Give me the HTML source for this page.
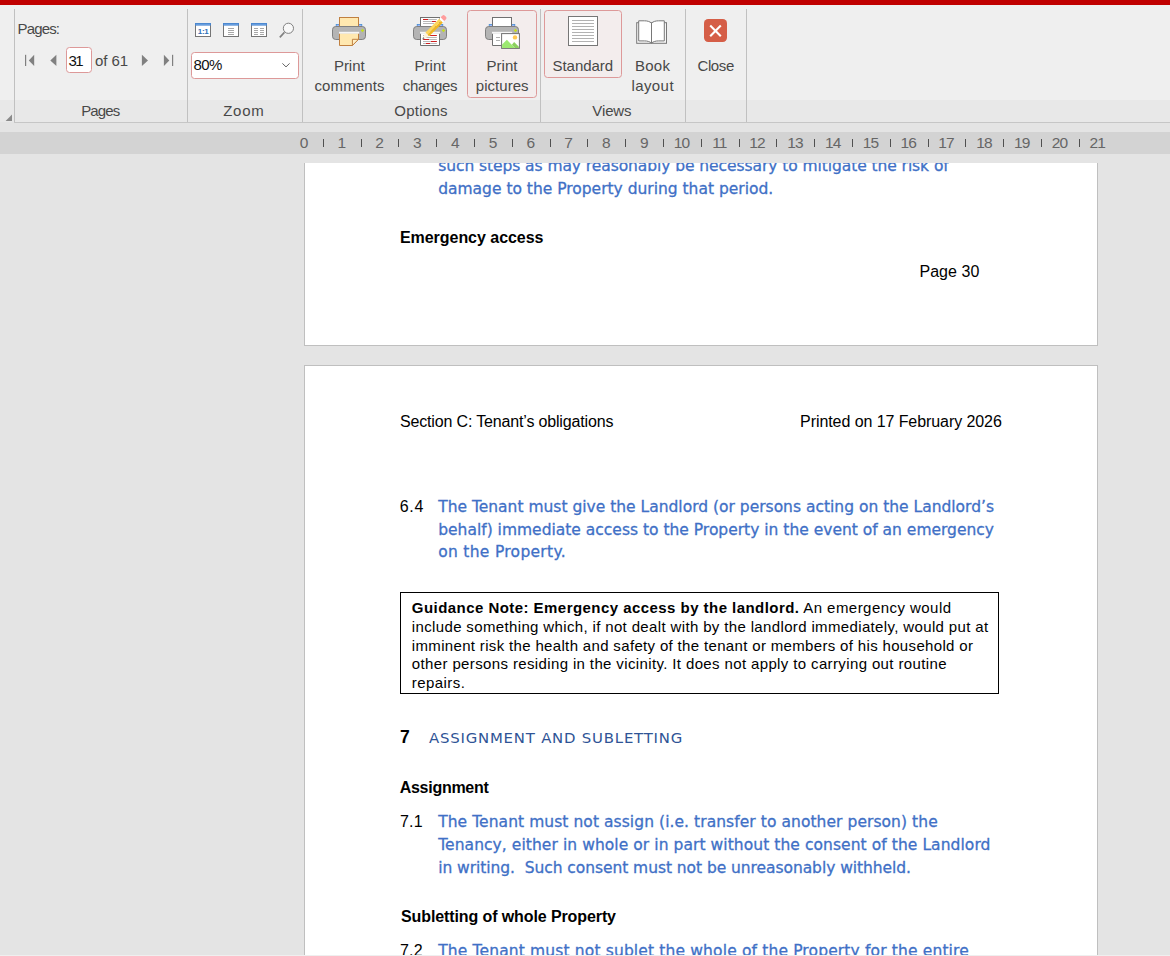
<!DOCTYPE html>
<html><head><meta charset="utf-8"><title>Print preview</title>
<style>
html,body{margin:0;padding:0;}
body{width:1170px;height:956px;overflow:hidden;background:#e4e4e4;position:relative;font-family:"Liberation Sans",sans-serif;}
.abs{position:absolute;}
#redbar{left:0;top:0;width:1170px;height:5px;background:#c00000;}
#ribbon{left:0;top:5px;width:1170px;height:117px;background:#efefef;}
#band{left:0;top:100px;width:1170px;height:22px;background:#e8e8e8;}
.vsep{width:1px;background:#c0c0c0;top:9px;height:113px;}
#hline{left:14px;top:122px;width:1156px;height:1px;background:#c6c6c6;}
#ruler{left:0;top:132px;width:1170px;height:22px;background:#d3d3d3;}
.ui{font-family:"Liberation Sans",sans-serif;color:#484848;font-size:15px;white-space:nowrap;line-height:20px;}
.c{text-align:center;}
.rn{font-family:"Liberation Sans",sans-serif;color:#666;font-size:15.5px;line-height:20px;width:40px;text-align:center;top:132.5px;}
.tick{width:1px;height:8px;background:#505050;top:139px;}
.page{background:#fff;border:1px solid #bfbfbf;box-sizing:border-box;overflow:hidden;}
.d{font-family:"Liberation Sans",sans-serif;color:#000;white-space:nowrap;line-height:20px;font-size:16px;}
.g{font-family:"Liberation Sans",sans-serif;color:#000;white-space:nowrap;line-height:18px;font-size:15px;}
.b{font-family:"DejaVu Sans",sans-serif;color:#4070c6;white-space:nowrap;line-height:22px;font-size:15.5px;-webkit-text-stroke:0.3px #4070c6;}
.btn{box-sizing:border-box;border:1px solid #dd9999;background:#f3eded;border-radius:3.5px;}
.inp{box-sizing:border-box;border:1px solid #dd9999;background:#fff;border-radius:3.5px;}
</style></head><body>
<div id="redbar" class="abs"></div>
<div id="ribbon" class="abs"></div>
<div id="band" class="abs"></div>
<div id="hline" class="abs"></div>
<div class="abs vsep" style="left:14px"></div>
<div class="abs vsep" style="left:187px"></div>
<div class="abs vsep" style="left:302px"></div>
<div class="abs vsep" style="left:540px"></div>
<div class="abs vsep" style="left:685px"></div>
<div class="abs vsep" style="left:746px"></div>
<div id="ruler" class="abs"></div>

<div class="abs rn" style="left:284.0px">0</div>
<div class="abs tick" style="left:323px"></div>
<div class="abs rn" style="left:321.8px">1</div>
<div class="abs tick" style="left:361px"></div>
<div class="abs rn" style="left:359.6px">2</div>
<div class="abs tick" style="left:398px"></div>
<div class="abs rn" style="left:397.4px">3</div>
<div class="abs tick" style="left:436px"></div>
<div class="abs rn" style="left:435.2px">4</div>
<div class="abs tick" style="left:474px"></div>
<div class="abs rn" style="left:473.0px">5</div>
<div class="abs tick" style="left:512px"></div>
<div class="abs rn" style="left:510.8px">6</div>
<div class="abs tick" style="left:550px"></div>
<div class="abs rn" style="left:548.6px">7</div>
<div class="abs tick" style="left:587px"></div>
<div class="abs rn" style="left:586.4px">8</div>
<div class="abs tick" style="left:625px"></div>
<div class="abs rn" style="left:624.2px">9</div>
<div class="abs tick" style="left:663px"></div>
<div class="abs rn" style="left:661.5px;letter-spacing:-0.9px">10</div>
<div class="abs tick" style="left:701px"></div>
<div class="abs rn" style="left:699.3px;letter-spacing:-0.9px">11</div>
<div class="abs tick" style="left:739px"></div>
<div class="abs rn" style="left:737.1px;letter-spacing:-0.9px">12</div>
<div class="abs tick" style="left:776px"></div>
<div class="abs rn" style="left:774.9px;letter-spacing:-0.9px">13</div>
<div class="abs tick" style="left:814px"></div>
<div class="abs rn" style="left:812.7px;letter-spacing:-0.9px">14</div>
<div class="abs tick" style="left:852px"></div>
<div class="abs rn" style="left:850.5px;letter-spacing:-0.9px">15</div>
<div class="abs tick" style="left:890px"></div>
<div class="abs rn" style="left:888.3px;letter-spacing:-0.9px">16</div>
<div class="abs tick" style="left:928px"></div>
<div class="abs rn" style="left:926.1px;letter-spacing:-0.9px">17</div>
<div class="abs tick" style="left:965px"></div>
<div class="abs rn" style="left:963.9px;letter-spacing:-0.9px">18</div>
<div class="abs tick" style="left:1003px"></div>
<div class="abs rn" style="left:1001.7px;letter-spacing:-0.9px">19</div>
<div class="abs tick" style="left:1041px"></div>
<div class="abs rn" style="left:1039.5px;letter-spacing:-0.9px">20</div>
<div class="abs tick" style="left:1079px"></div>
<div class="abs rn" style="left:1077.3px;letter-spacing:-0.9px">21</div>
<div class="abs ui" style="left:17.5px;top:18.6px;letter-spacing:-0.84px;">Pages:</div>
<div class="abs ui" style="left:95px;top:50.6px;letter-spacing:-0.04px;">of 61</div>
<div class="abs inp" style="left:66px;top:47px;width:26px;height:26px"></div>
<div class="abs ui" style="left:68.5px;top:50.6px;letter-spacing:-1.69px;color:#111">31</div>
<div class="abs ui c" style="left:40.3px;width:120px;top:100.5px;letter-spacing:-0.84px;">Pages</div>
<div class="abs ui c" style="left:183.9px;width:120px;top:100.5px;letter-spacing:0.79px;">Zoom</div>
<div class="abs ui c" style="left:361.1px;width:120px;top:100.5px;letter-spacing:0.25px;">Options</div>
<div class="abs ui c" style="left:551.9px;width:120px;top:100.5px;letter-spacing:-0.14px;">Views</div>
<div class="abs inp" style="left:191px;top:52px;width:108px;height:27px"></div>
<div class="abs ui" style="left:193.5px;top:55.2px;letter-spacing:-0.57px;color:#111">80%</div>
<div class="abs btn" style="left:467px;top:10px;width:70px;height:88px"></div>
<div class="abs btn" style="left:544px;top:10px;width:78px;height:68px"></div>
<div class="abs ui c" style="left:289.3px;width:120px;top:55.5px;letter-spacing:-0.01px;">Print</div>
<div class="abs ui c" style="left:289.6px;width:120px;top:75.5px;letter-spacing:0.14px;">comments</div>
<div class="abs ui c" style="left:370.0px;width:120px;top:55.5px;letter-spacing:-0.01px;">Print</div>
<div class="abs ui c" style="left:370.0px;width:120px;top:75.5px;letter-spacing:-0.34px;">changes</div>
<div class="abs ui c" style="left:442.0px;width:120px;top:55.5px;letter-spacing:-0.01px;">Print</div>
<div class="abs ui c" style="left:442.2px;width:120px;top:75.5px;letter-spacing:0.04px;">pictures</div>
<div class="abs ui c" style="left:522.8px;width:120px;top:55.5px;letter-spacing:-0.01px;">Standard</div>
<div class="abs ui c" style="left:592.6px;width:120px;top:55.5px;letter-spacing:0.30px;">Book</div>
<div class="abs ui c" style="left:592.7px;width:120px;top:75.5px;letter-spacing:0.43px;">layout</div>
<div class="abs ui c" style="left:655.7px;width:120px;top:55.5px;letter-spacing:-0.36px;">Close</div>
<!-- corner launcher -->
<svg class="abs" style="left:4px;top:113px" width="10" height="10" viewBox="0 0 10 10"><path d="M8 1.6V8H1.6Z" fill="#8a8a8a"/></svg>
<!-- nav arrows -->
<svg class="abs" style="left:20px;top:50px" width="160" height="20" viewBox="0 0 160 20">
<g fill="#808080">
<rect x="5" y="4.8" width="1.2" height="11.2"/><path d="M14.2 4.8V16L8.8 10.4Z"/>
<path d="M36.4 4.8V16L30.3 10.4Z"/>
<path d="M121.9 4.8V16L128 10.4Z"/>
<path d="M143.9 4.8V16L149.3 10.4Z"/><rect x="152" y="4.8" width="1.2" height="11.2"/>
</g></svg>
<!-- zoom icons -->
<svg class="abs" style="left:190px;top:18px" width="110" height="24" viewBox="0 0 110 24">
<g>
<rect x="5.5" y="5.5" width="15" height="13" fill="#fff" stroke="#757575"/>
<rect x="5" y="5" width="16" height="2.6" fill="#4a86cf"/><rect x="6" y="5.9" width="14" height="0.9" fill="#6ea3e3"/>
<text x="13.2" y="16" font-family="Liberation Sans, sans-serif" font-weight="bold" font-size="8" text-anchor="middle" fill="#2e70b8" letter-spacing="-0.3">1:1</text>
<rect x="33.5" y="5.5" width="15" height="13" fill="#fff" stroke="#757575"/>
<rect x="33" y="5" width="16" height="2.6" fill="#4a86cf"/><rect x="34" y="5.9" width="14" height="0.9" fill="#6ea3e3"/>
<path d="M38 10.5h6M38 12.5h6M38 14.5h6M38 16.5h6" stroke="#a8a8a8" stroke-width="1"/>
<rect x="61.5" y="5.5" width="15" height="13" fill="#fff" stroke="#757575"/>
<rect x="61" y="5" width="16" height="2.6" fill="#4a86cf"/><rect x="62" y="5.9" width="14" height="0.9" fill="#6ea3e3"/>
<path d="M64 10.5h4M64 12.5h4M64 14.5h4M64 16.5h4M70 10.5h4M70 12.5h4M70 14.5h4M70 16.5h4" stroke="#a8a8a8" stroke-width="1"/>
<path d="M94.4 14.4L89.8 19.4" stroke="#808080" stroke-width="1.6" fill="none"/>
<circle cx="98.4" cy="10.3" r="5.1" fill="#f8f8f8" stroke="#808080" stroke-width="1"/>
</g></svg>
<!-- combobox chevron -->
<svg class="abs" style="left:278px;top:58px" width="16" height="14" viewBox="0 0 16 14"><path d="M4.4 5.4L8 8.9L11.6 5.4" fill="none" stroke="#666" stroke-width="1"/></svg>
<!-- printer: comments -->
<svg class="abs" style="left:325px;top:10px" width="50" height="40" viewBox="0 0 50 40">
<rect x="11.2" y="14.4" width="3.2" height="2.4" fill="#9db8ff" stroke="#4a8fd0" stroke-width="0.8"/>
<rect x="33.6" y="14.4" width="3.2" height="2.4" fill="#9db8ff" stroke="#4a8fd0" stroke-width="0.8"/>
<rect x="14.5" y="7.5" width="19" height="10" fill="#ffe8b0" stroke="#c08040"/>
<rect x="7.5" y="16.5" width="33" height="13" rx="3.2" fill="#b4b4b4" stroke="#808080"/>
<path d="M37.5 18.8L39.2 20.5L37.5 22.2L35.8 20.5Z" fill="#c6e01c"/>
<rect x="14" y="21.8" width="20.2" height="2" fill="#f6f6f6"/>
<path d="M14.5 23.8V35.5H27.4L33.5 29.3V23.8" fill="#ffe8b0" stroke="#c08040"/>
<path d="M27.4 35.5V29.3H33.5Z" fill="#fff0c8" stroke="#c08040" stroke-linejoin="round"/>
</svg>
<!-- printer: changes -->
<svg class="abs" style="left:405px;top:10px" width="50" height="40" viewBox="0 0 50 40">
<rect x="12.2" y="14.4" width="3.2" height="2.4" fill="#9db8ff" stroke="#4a8fd0" stroke-width="0.8"/>
<rect x="34.6" y="14.4" width="3.2" height="2.4" fill="#9db8ff" stroke="#4a8fd0" stroke-width="0.8"/>
<rect x="15.5" y="7.5" width="19" height="10" fill="#fff" stroke="#707070"/>
<path d="M18 9.5h13.8M18 11.5h13M18 13.5h11" stroke="#b8b8b8"/>
<path d="M18 9.5h5M27 11.5h3.8" stroke="#d02020"/>
<rect x="8.5" y="16.5" width="33" height="13" rx="3.2" fill="#b4b4b4" stroke="#808080"/>
<path d="M38.5 18.8L40.2 20.5L38.5 22.2L36.8 20.5Z" fill="#c6e01c"/>
<rect x="15" y="21.8" width="20.2" height="2" fill="#f6f6f6"/>
<path d="M15.5 23.8V35.5H34.5V23.8" fill="#fff" stroke="#707070"/>
<path d="M18 25.5h13.8M18 27.5h13.8M18 29.5h13.8M18 31.5h13.8M18 33.5h13.8" stroke="#b8b8b8"/>
<path d="M25.2 25.5h6.6M18.2 29.5h5.8M26 31.5h5.8M21 33.5h4" stroke="#d02020"/>
<g transform="translate(17.2 29.4) rotate(-45)">
<path d="M0 0L2.6 -1.1V1.1Z" fill="#707070"/>
<path d="M2.4 -1L7.2 -2.6V2.6L2.4 1Z" fill="#fdf2dc"/>
<rect x="7.2" y="-2.6" width="19.4" height="2.9" fill="#fdd55a"/>
<rect x="7.2" y="0.3" width="19.4" height="2.3" fill="#f1b722"/>
<rect x="26.6" y="-2.6" width="2" height="5.2" fill="#fff"/>
<path d="M28.6 -2.6H31Q32.8 -2.6 32.8 -0.8V0.8Q32.8 2.6 31 2.6H28.6Z" fill="#ff9c9c"/>
</g>
</svg>
<!-- printer: pictures -->
<svg class="abs" style="left:477px;top:10px" width="50" height="40" viewBox="0 0 50 40">
<rect x="12.2" y="14.4" width="3.2" height="2.4" fill="#9db8ff" stroke="#4a8fd0" stroke-width="0.8"/>
<rect x="34.6" y="14.4" width="3.2" height="2.4" fill="#9db8ff" stroke="#4a8fd0" stroke-width="0.8"/>
<rect x="15.5" y="7.5" width="19" height="10" fill="#fff" stroke="#707070"/>
<rect x="8.5" y="16.5" width="33" height="13" rx="3.2" fill="#b4b4b4" stroke="#808080"/>
<path d="M38.5 18.8L40.2 20.5L38.5 22.2L36.8 20.5Z" fill="#c6e01c"/>
<rect x="15" y="21.8" width="20.2" height="2" fill="#f6f6f6"/>
<path d="M15.5 23.8V35.5H30V23.8" fill="#fff" stroke="#707070"/>
<path d="M19 27.5h4M19 30.5h4" stroke="#b0b0b0"/>
<rect x="24.6" y="23.6" width="17.8" height="14.8" fill="#fff" stroke="#707070"/>
<circle cx="38" cy="27.4" r="2.2" fill="#ffc850"/>
<path d="M25.1 34.5L29.9 29.8L38 37.9H25.1Z" fill="#9be870"/>
<path d="M34.9 34.8L37.1 32L41.9 36.8V37.9H38Z" fill="#8cd060"/>
</svg>
<!-- standard -->
<svg class="abs" style="left:558px;top:10px" width="50" height="40" viewBox="0 0 50 40">
<rect x="10.5" y="6.5" width="29" height="29" fill="#fff" stroke="#767676"/>
<path d="M14 10.5h22M14 13.5h22M14 16.5h22M14 19.5h22M14 22.5h22M14 25.5h22M14 28.5h22M14 31.5h22" stroke="#b2b2b2"/>
</svg>
<!-- book -->
<svg class="abs" style="left:627px;top:10px" width="50" height="40" viewBox="0 0 50 40">
<rect x="9.7" y="12.7" width="29.8" height="20.6" fill="#f6f6f6" stroke="#787878"/>
<path d="M11.7 10.8H17.5C20.5 10.8 22.6 11.6 24.5 13V33C22.6 31.7 20.5 30.9 17.5 30.9H11.7Z" fill="#fff" stroke="#787878"/>
<path d="M37.3 10.8H31.5C28.5 10.8 26.4 11.6 24.5 13V33C26.4 31.7 28.5 30.9 31.5 30.9H37.3Z" fill="#fff" stroke="#787878"/>
</svg>
<!-- close -->
<svg class="abs" style="left:695px;top:10px" width="50" height="40" viewBox="0 0 50 40">
<rect x="9" y="9" width="23" height="23" rx="4.2" fill="#d55e47"/>
<path d="M15.2 15.6L25.8 26.2M25.8 15.6L15.2 26.2" stroke="#fff" stroke-width="2.1"/>
</svg>

<div id="page1" class="abs page" style="left:304px;top:163px;width:794px;height:183px;border-top:none"></div>
<div id="page2" class="abs page" style="left:304px;top:365px;width:794px;height:600px;"></div>
<div class="abs" style="left:0;top:163px;width:1170px;height:792px;overflow:hidden"><div class="abs" style="left:0;top:-163px;width:1170px;height:956px">
<div class="abs b" style="left:438.2px;top:155.0px;letter-spacing:-0.070px;">such steps as may reasonably be necessary to mitigate the risk of</div>
<div class="abs b" style="left:438.2px;top:178.0px;letter-spacing:-0.006px;">damage to the Property during that period.</div>
<div class="abs d" style="left:399.9px;top:227.5px;font-weight:bold;letter-spacing:-0.034px;">Emergency access</div>
<div class="abs d" style="left:919.4px;top:261.8px;letter-spacing:0.065px;">Page 30</div>
<div class="abs d" style="left:400.0px;top:412.0px;letter-spacing:-0.161px;">Section C: Tenant’s obligations</div>
<div class="abs d" style="left:800.1px;top:412.0px;letter-spacing:-0.076px;">Printed on 17 February 2026</div>
<div class="abs d" style="left:399.7px;top:496.5px;letter-spacing:0.675px;">6.4</div>
<div class="abs b" style="left:438.2px;top:496.0px;letter-spacing:-0.002px;">The Tenant must give the Landlord (or persons acting on the Landlord’s</div>
<div class="abs b" style="left:438.2px;top:519.0px;letter-spacing:-0.002px;">behalf) immediate access to the Property in the event of an emergency</div>
<div class="abs b" style="left:438.2px;top:541.0px;letter-spacing:0.300px;">on the Property.</div>
<div class="abs" style="left:400px;top:592px;width:599px;height:102px;box-sizing:border-box;border:1px solid #000"></div>
<div class="abs g" style="left:411.8px;top:599.2px;letter-spacing:0.452px;"><b>Guidance Note: Emergency access by the landlord.</b> An emergency would</div>
<div class="abs g" style="left:411.8px;top:617.8px;letter-spacing:0.357px;">include something which, if not dealt with by the landlord immediately, would put at</div>
<div class="abs g" style="left:411.8px;top:636.5px;letter-spacing:0.338px;">imminent risk the health and safety of the tenant or members of his household or</div>
<div class="abs g" style="left:411.8px;top:654.9px;letter-spacing:0.371px;">other persons residing in the vicinity. It does not apply to carrying out routine</div>
<div class="abs g" style="left:411.8px;top:673.6px;letter-spacing:0.438px;">repairs.</div>
<div class="abs d" style="left:400.0px;top:726.8px;font-weight:bold;font-size:17.5px;letter-spacing:0.466px;">7</div>
<div class="abs b" style="left:429px;top:726.8px;font-size:14.9px;letter-spacing:0.796px;color:#2f5496;-webkit-text-stroke:0">ASSIGNMENT AND SUBLETTING</div>
<div class="abs d" style="left:399.7px;top:778.1px;font-weight:bold;letter-spacing:-0.275px;">Assignment</div>
<div class="abs d" style="left:400.0px;top:812.0px;letter-spacing:0.175px;">7.1</div>
<div class="abs b" style="left:438.2px;top:811.0px;letter-spacing:0.063px;">The Tenant must not assign (i.e. transfer to another person) the</div>
<div class="abs b" style="left:438.2px;top:834.0px;letter-spacing:0.066px;">Tenancy, either in whole or in part without the consent of the Landlord</div>
<div class="abs b" style="left:438.2px;top:857.0px;letter-spacing:-0.058px;">in writing.&nbsp; Such consent must not be unreasonably withheld.</div>
<div class="abs d" style="left:401.0px;top:907.2px;font-weight:bold;letter-spacing:-0.103px;">Subletting of whole Property</div>
<div class="abs d" style="left:400.0px;top:941.0px;letter-spacing:0.175px;">7.2</div>
<div class="abs b" style="left:438.2px;top:940.0px;letter-spacing:0.146px;">The Tenant must not sublet the whole of the Property for the entire</div>
</div></div>
<div class="abs" style="left:0;top:955px;width:1170px;height:1px;background:#efefef"></div>
</body></html>
